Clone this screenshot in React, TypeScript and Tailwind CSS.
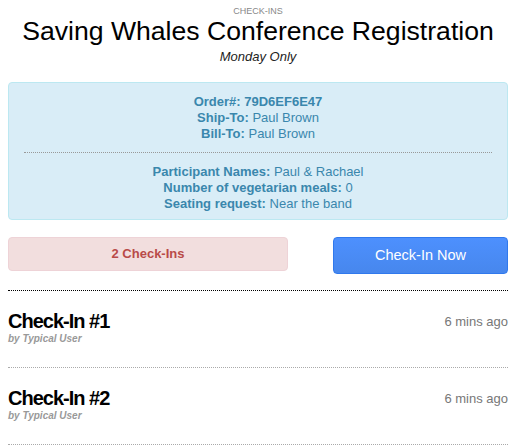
export default function App() {
  const checkIns = [
    { id: 1, by: "Typical User", when: "6 mins ago" },
    { id: 2, by: "Typical User", when: "6 mins ago" },
  ];

  return (
    <div className="w-[520px] h-[448px] overflow-hidden bg-white pl-2 pr-3 font-['Liberation_Sans',Arial,sans-serif]">
      <div className="text-center pt-[6px]">
        <div className="text-[9px] leading-[10px] text-[#888]">CHECK-INS</div>
        <h1 className="text-[26.6px] leading-[30px] text-black">Saving Whales Conference Registration</h1>
        <div className="mt-[3px] text-[13px] leading-[16px] italic text-[#222]">Monday Only</div>
      </div>

      <div className="mt-[17px] rounded-[4px] border border-[#bce8f1] bg-[#d9edf7] px-[15px] pt-[11px] pb-[7px] text-center text-[13px] leading-[16px] text-[#3a87ad]">
        <div>
          <b>Order#: 79D6EF6E47</b>
        </div>
        <div>
          <b>Ship-To:</b> Paul Brown
        </div>
        <div>
          <b>Bill-To:</b> Paul Brown
        </div>
        <div className="mt-[10px] mb-[11px] border-t border-dotted border-[#999]" />
        <div>
          <b>Participant Names:</b> Paul &amp; Rachael
        </div>
        <div>
          <b>Number of vegetarian meals:</b> 0
        </div>
        <div>
          <b>Seating request:</b> Near the band
        </div>
      </div>

      <div className="mt-[17px] flex items-start justify-between">
        <div className="flex h-[34px] w-[280px] items-center justify-center rounded-[4px] border border-[#eed3d7] bg-[#f2dede] text-[13px] font-bold text-[#b94a48]">
          2 Check-Ins
        </div>
        <button className="h-[37px] w-[175px] rounded-[4px] border border-[#3079ed] bg-gradient-to-b from-[#4d90fe] to-[#4787ed] text-[14.5px] text-white">
          Check-In Now
        </button>
      </div>

      <div className="mt-[16px] border-t border-dotted border-black" />

      {checkIns.map((c) => (
        <div key={c.id} className="flex justify-between border-b border-dotted border-[#aaa] pt-[18px] pb-[22px]">
          <div>
            <div className="text-[20px] leading-[24px] font-bold tracking-[-1px] text-black">Check-In #{c.id}</div>
            <div className="text-[10px] leading-[12px] font-bold italic text-[#999]">by {c.by}</div>
          </div>
          <div className="pt-[5px] text-[13px] leading-[16px] text-[#777]">{c.when}</div>
        </div>
      ))}
    </div>
  );
}
